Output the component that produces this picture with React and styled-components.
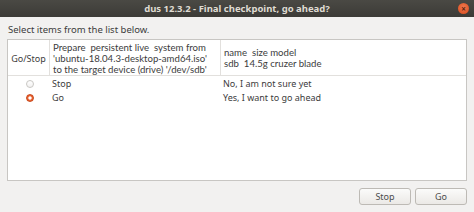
import React from "react";
import styled, { createGlobalStyle } from "styled-components";

const Global = createGlobalStyle`
  html, body { margin: 0; padding: 0; background: #f2f1f0; }
  body { font-family: "Noto Sans", "DejaVu Sans", sans-serif; color: #3c3c3c; }
`;

const Window = styled.div`
  width: 474px;
  height: 212px;
  display: flex;
  flex-direction: column;
  background: #f2f1f0;
  overflow: hidden;
`;

const TitleBar = styled.div`
  position: relative;
  height: 17px;
  flex: none;
  background: linear-gradient(#4a4944, #3c3b37);
  display: flex;
  align-items: center;
  justify-content: center;
  color: #dfdbd2;
  font-size: 9.5px;
  font-weight: bold;
`;

const CloseButton = styled.div`
  position: absolute;
  right: 5px;
  top: 3px;
  width: 11px;
  height: 11px;
  border-radius: 50%;
  background: radial-gradient(circle at 50% 40%, #f07a50, #d8491a);
  display: flex;
  align-items: center;
  justify-content: center;
  &::before {
    content: "×";
    color: #5a2210;
    font-size: 8px;
    line-height: 8px;
    font-weight: bold;
  }
`;

const Body = styled.div`
  flex: 1;
  display: flex;
  flex-direction: column;
  padding: 5px 7px 0 7px;
`;

const Prompt = styled.div`
  font-size: 9.5px;
  height: 16px;
  line-height: 16px;
  padding-left: 1px;
  margin-bottom: 1px;
`;

const ListBox = styled.div`
  height: 140px;
  background: #ffffff;
  border: 1px solid #c8c6c3;
  display: grid;
  grid-template-columns: 42px 171px 1fr;
  grid-template-rows: 36px 15px 14px 1fr;
  font-size: 9px;
`;

const HeadCell = styled.div`
  display: flex;
  flex-direction: column;
  justify-content: center;
  align-items: ${(p) => (p.$center ? "center" : "flex-start")};
  padding-left: ${(p) => (p.$center ? "0" : "3px")};
  padding-top: 1px;
  border-bottom: 1px solid #e2e0dd;
  border-right: ${(p) => (p.$last ? "none" : "1px solid #e2e0dd")};
  white-space: pre;
  color: #3c3c3c;
`;

const HeadLine = styled.span`
  font-family: "Lato", "Noto Sans", sans-serif;
  font-size: 9.6px;
  line-height: 11px;
  height: 11px;
`;

const Cell = styled.div`
  display: flex;
  align-items: center;
  justify-content: ${(p) => (p.$center ? "center" : "flex-start")};
  padding-left: ${(p) => p.$pad || "0"};
  white-space: pre;
  line-height: 12px;
`;

const Radio = styled.span`
  width: 8px;
  height: 8px;
  border-radius: 50%;
  box-sizing: border-box;
  margin-left: 2px;
  border: 1px solid ${(p) => (p.$on ? "#c7471a" : "#c9c7c4")};
  background: ${(p) =>
    p.$on
      ? "radial-gradient(circle, #ffffff 0 1.4px, #ee6b3c 1.8px, #e0521f 100%)"
      : "linear-gradient(#ffffff, #f2f1f0)"};
`;

const Filler = styled.div`
  grid-column: 1 / -1;
`;

const ButtonRow = styled.div`
  display: flex;
  justify-content: flex-end;
  gap: 4px;
  margin-top: 7px;
`;

const Button = styled.button`
  width: 52px;
  height: 17px;
  padding: 0;
  border: 1px solid #bdbab5;
  border-radius: 3px;
  background: linear-gradient(#fbfbfa, #ebe9e6);
  font-family: "Noto Sans", "DejaVu Sans", sans-serif;
  font-size: 9px;
  color: #4c4c4c;
`;

const rows = [
  { label: "Stop", desc: "No, I am not sure yet", on: false },
  { label: "Go", desc: "Yes, I want to go ahead", on: true },
];

export default function App() {
  return (
    <>
      <Global />
      <Window>
        <TitleBar>
          dus 12.3.2 - Final checkpoint, go ahead?
          <CloseButton />
        </TitleBar>
        <Body>
          <Prompt>Select items from the list below.</Prompt>
          <ListBox>
            <HeadCell $center>Go/Stop</HeadCell>
            <HeadCell>
              <HeadLine>{"Prepare  persistent live  system from"}</HeadLine>
              <HeadLine>'ubuntu-18.04.3-desktop-amd64.iso'</HeadLine>
              <HeadLine>to the target device (drive) '/dev/sdb'</HeadLine>
            </HeadCell>
            <HeadCell $last>
              <HeadLine>{"name  size model"}</HeadLine>
              <HeadLine>{"sdb  14.5g cruzer blade"}</HeadLine>
            </HeadCell>
            {rows.map((r) => (
              <React.Fragment key={r.label}>
                <Cell $center>
                  <Radio $on={r.on} />
                </Cell>
                <Cell $pad="2px">{r.label}</Cell>
                <Cell $pad="2px">{r.desc}</Cell>
              </React.Fragment>
            ))}
            <Filler />
          </ListBox>
          <ButtonRow>
            <Button>Stop</Button>
            <Button>Go</Button>
          </ButtonRow>
        </Body>
      </Window>
    </>
  );
}
